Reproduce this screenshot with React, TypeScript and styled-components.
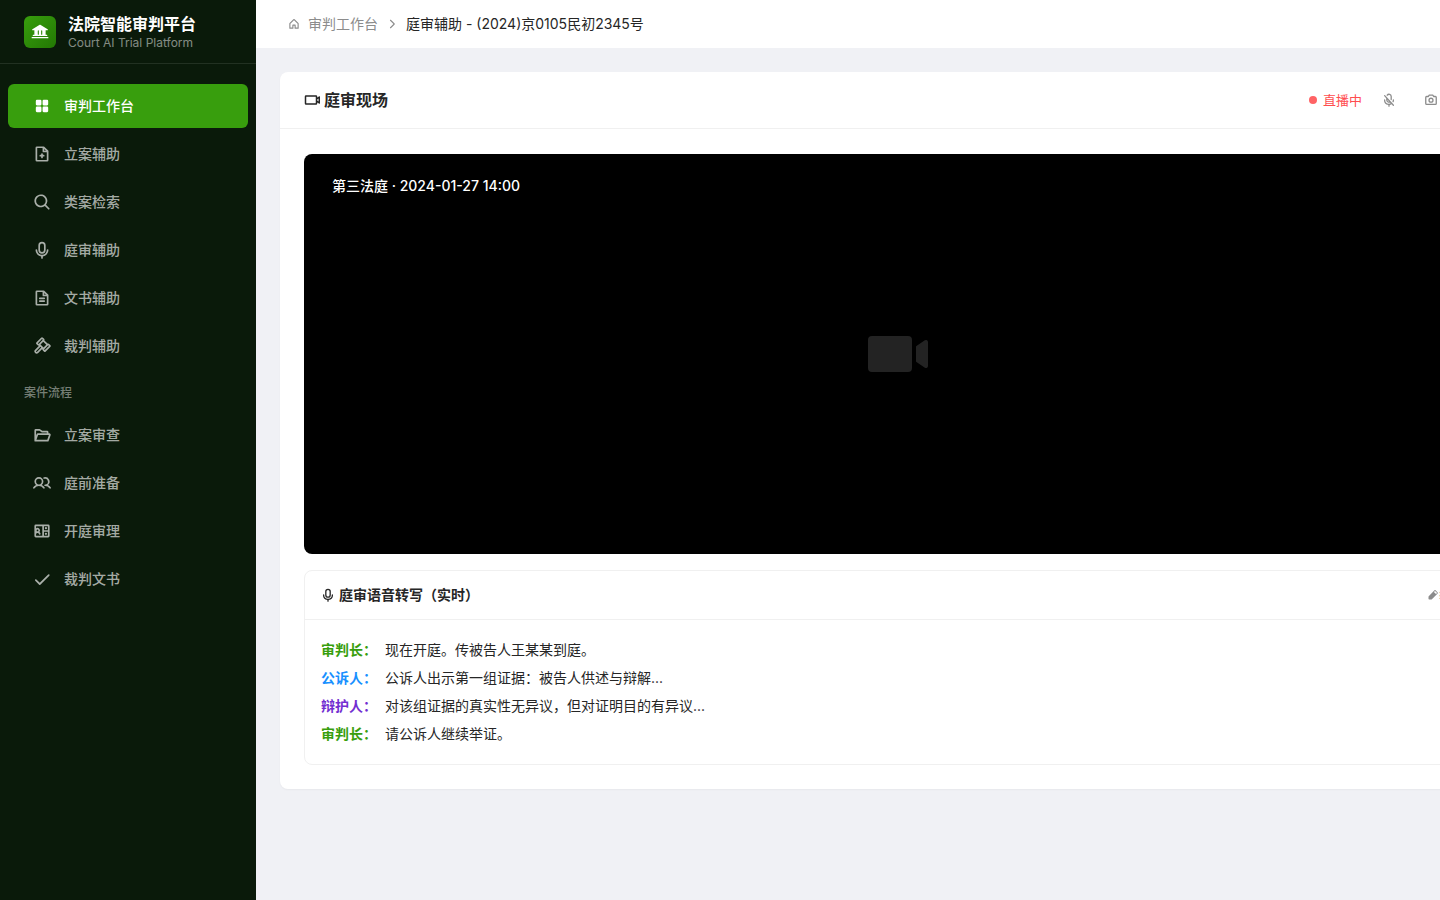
import React from 'react';
import styled, { createGlobalStyle } from 'styled-components';
import type { IconType } from 'react-icons';
import {
  PiBankFill,
  PiCameraBold,
  PiCaretRightBold,
  PiCheckBold,
  PiCornersOutBold,
  PiFilePlusBold,
  PiFileTextBold,
  PiFolderOpenBold,
  PiGavelBold,
  PiHouseBold,
  PiMagnifyingGlassBold,
  PiMicrophoneBold,
  PiMicrophoneSlashBold,
  PiPencilSimpleFill,
  PiSquaresFourFill,
  PiUsersBold,
  PiVideoCameraBold,
  PiVideoCameraFill,
  PiVideoConferenceBold,
} from 'react-icons/pi';

const GlobalStyle = createGlobalStyle`
  *, *::before, *::after { box-sizing: border-box; }
  body {
    margin: 0;
    background: #f0f1f5;
    color: #262626;
    font-family: Inter, "Noto Sans CJK SC", sans-serif;
    font-size: 14px;
    line-height: 20px;
    -webkit-font-smoothing: antialiased;
  }
  button { font: inherit; }
`;

const Shell = styled.div`
  display: flex;
  min-height: 100vh;
  overflow: hidden;
`;

const Sidebar = styled.aside`
  flex: 0 0 256px;
  background: #0a1a0a;
  color: #fff;
`;

const Brand = styled.div`
  display: flex;
  align-items: center;
  gap: 12px;
  height: 64px;
  padding: 0 24px;
  border-bottom: 1px solid rgba(255, 255, 255, 0.1);
`;

const BrandMark = styled.span`
  display: grid;
  place-items: center;
  width: 32px;
  height: 32px;
  border-radius: 6px;
  background: linear-gradient(135deg, #389e0d, #237804);
  font-size: 18px;
`;

const BrandText = styled.div`
  padding-top: 2px;
`;

const BrandName = styled.div`
  font-size: 16px;
  font-weight: 600;
  line-height: 20px;
`;

const BrandSub = styled.div`
  color: rgba(255, 255, 255, 0.5);
  font-size: 12px;
  line-height: 17px;
`;

const Nav = styled.nav`
  padding: 20px 8px;
`;

const NavList = styled.ul`
  display: flex;
  flex-direction: column;
  gap: 4px;
  margin: 0;
  padding: 0;
  list-style: none;
`;

const NavLink = styled.a<{ $active?: boolean }>`
  display: flex;
  align-items: center;
  gap: 12px;
  height: 44px;
  padding: 0 24px;
  border-radius: 6px;
  background: ${(p) => (p.$active ? '#389e0d' : 'transparent')};
  color: ${(p) => (p.$active ? '#fff' : 'rgba(255, 255, 255, 0.65)')};
  font-weight: 500;
  text-decoration: none;

  svg {
    width: 20px;
    height: 18px;
  }
`;

const NavHeading = styled.h2`
  margin: 0;
  padding: 15px 16px 10px;
  color: rgba(255, 255, 255, 0.45);
  font-size: 12px;
  font-weight: 500;
  line-height: 20px;
`;

const Main = styled.main`
  flex: 1;
  min-width: 0;
`;

const Breadcrumb = styled.nav`
  display: flex;
  align-items: center;
  gap: 8px;
  height: 48px;
  padding: 0 32px;
  background: #fff;
  color: #8c8c8c;

  svg { font-size: 12px; }
`;

const Crumb = styled.a`
  display: flex;
  align-items: center;
  gap: 8px;
  color: inherit;
  text-decoration: none;
`;

const CurrentCrumb = styled.span`
  color: #262626;
`;

const Content = styled.div`
  padding: 24px;
`;

const Card = styled.section`
  min-width: 1232px;
  border-radius: 8px;
  background: #fff;
  box-shadow: 0 1px 2px rgba(0, 0, 0, 0.04);
`;

const CardHeader = styled.header`
  display: flex;
  align-items: center;
  justify-content: space-between;
  padding: 16px 24px;
  border-bottom: 1px solid #f0f0f0;
`;

const CardTitle = styled.h1`
  display: flex;
  align-items: center;
  gap: 4px;
  margin: 0;
  font-size: 16px;
  font-weight: 600;
  line-height: 24px;
`;

const Tools = styled.div`
  display: flex;
  align-items: center;
  gap: 12px;
`;

const Live = styled.span`
  display: flex;
  align-items: center;
  gap: 6px;
  color: #ff4d4f;
  font-size: 13px;

  &::before {
    content: '';
    width: 8px;
    height: 8px;
    border-radius: 50%;
    background: #ff6365;
  }
`;

const ToolButton = styled.button<{ $small?: boolean }>`
  display: flex;
  align-items: center;
  height: 24px;
  padding: 0 8px;
  border: 0;
  border-radius: 4px;
  background: none;
  color: #8c8c8c;
  font-size: ${(p) => (p.$small ? 12 : 14)}px;
  line-height: 20px;
  white-space: nowrap;
  cursor: pointer;
`;

const CardBody = styled.div`
  display: flex;
  flex-direction: column;
  gap: 16px;
  padding: 25px 24px 24px;
`;

const Video = styled.div`
  position: relative;
  display: grid;
  place-items: center;
  height: 400px;
  border-radius: 8px;
  background: #000;
  color: #232323;
  font-size: 64px;
`;

const VideoCaption = styled.div`
  position: absolute;
  top: 22px;
  left: 28px;
  color: #fff;
  font-size: 14px;
  font-weight: 500;
  line-height: 20px;
`;

const Panel = styled.section`
  border: 1px solid #f0f0f0;
  border-radius: 8px;
`;

const PanelHeader = styled.header`
  display: flex;
  align-items: center;
  justify-content: space-between;
  padding: 12px 16px;
  border-bottom: 1px solid #f0f0f0;
`;

const PanelTitle = styled.h2`
  display: flex;
  align-items: center;
  gap: 4px;
  margin: 0;
  font-size: 14px;
  font-weight: 600;
  line-height: 24px;
`;

const Transcript = styled.dl`
  margin: 0;
  padding: 16px;
`;

const Line = styled.div`
  display: flex;
  gap: 8px;
  line-height: 28px;
`;

const Speaker = styled.dt<{ $color: string }>`
  flex: 0 0 56px;
  color: ${(p) => p.$color};
  font-weight: 600;
`;

const Speech = styled.dd`
  margin: 0;
`;

type NavEntry = { icon: IconType; label: string; active?: boolean };

const mainNav: NavEntry[] = [
  { icon: PiSquaresFourFill, label: '审判工作台', active: true },
  { icon: PiFilePlusBold, label: '立案辅助' },
  { icon: PiMagnifyingGlassBold, label: '类案检索' },
  { icon: PiMicrophoneBold, label: '庭审辅助' },
  { icon: PiFileTextBold, label: '文书辅助' },
  { icon: PiGavelBold, label: '裁判辅助' },
];

const flowNav: NavEntry[] = [
  { icon: PiFolderOpenBold, label: '立案审查' },
  { icon: PiUsersBold, label: '庭前准备' },
  { icon: PiVideoConferenceBold, label: '开庭审理' },
  { icon: PiCheckBold, label: '裁判文书' },
];

const lines = [
  { who: '审判长：', color: '#389e0d', text: '现在开庭。传被告人王某某到庭。' },
  { who: '公诉人：', color: '#1890ff', text: '公诉人出示第一组证据：被告人供述与辩解...' },
  { who: '辩护人：', color: '#722ed1', text: '对该组证据的真实性无异议，但对证明目的有异议...' },
  { who: '审判长：', color: '#389e0d', text: '请公诉人继续举证。' },
];

function NavGroup({ items }: { items: NavEntry[] }) {
  return (
    <NavList>
      {items.map(({ icon: Icon, label, active }) => (
        <li key={label}>
          <NavLink href="#" $active={active} aria-current={active ? 'page' : undefined}>
            <Icon aria-hidden />
            {label}
          </NavLink>
        </li>
      ))}
    </NavList>
  );
}

export default function App() {
  return (
    <>
      <GlobalStyle />
      <Shell>
        <Sidebar>
          <Brand>
            <BrandMark><PiBankFill aria-hidden /></BrandMark>
            <BrandText>
              <BrandName>法院智能审判平台</BrandName>
              <BrandSub>Court AI Trial Platform</BrandSub>
            </BrandText>
          </Brand>
          <Nav>
            <NavGroup items={mainNav} />
            <NavHeading>案件流程</NavHeading>
            <NavGroup items={flowNav} />
          </Nav>
        </Sidebar>
        <Main>
          <Breadcrumb>
            <Crumb href="#"><PiHouseBold aria-hidden />审判工作台</Crumb>
            <PiCaretRightBold aria-hidden />
            <CurrentCrumb>庭审辅助 - (2024)京0105民初2345号</CurrentCrumb>
          </Breadcrumb>
          <Content>
            <Card>
              <CardHeader>
                <CardTitle><PiVideoCameraBold aria-hidden />庭审现场</CardTitle>
                <Tools>
                  <Live>直播中</Live>
                  <ToolButton type="button" aria-label="静音"><PiMicrophoneSlashBold /></ToolButton>
                  <ToolButton type="button" aria-label="截图"><PiCameraBold /></ToolButton>
                  <ToolButton type="button" aria-label="全屏"><PiCornersOutBold /></ToolButton>
                </Tools>
              </CardHeader>
              <CardBody>
                <Video>
                  <PiVideoCameraFill aria-hidden />
                  <VideoCaption>第三法庭 · 2024-01-27 14:00</VideoCaption>
                </Video>
                <Panel>
                  <PanelHeader>
                    <PanelTitle><PiMicrophoneBold aria-hidden />庭审语音转写（实时）</PanelTitle>
                    <ToolButton type="button" $small><PiPencilSimpleFill aria-hidden />编辑</ToolButton>
                  </PanelHeader>
                  <Transcript>
                    {lines.map((line, i) => (
                      <Line key={i}>
                        <Speaker $color={line.color}>{line.who}</Speaker>
                        <Speech>{line.text}</Speech>
                      </Line>
                    ))}
                  </Transcript>
                </Panel>
              </CardBody>
            </Card>
          </Content>
        </Main>
      </Shell>
    </>
  );
}
